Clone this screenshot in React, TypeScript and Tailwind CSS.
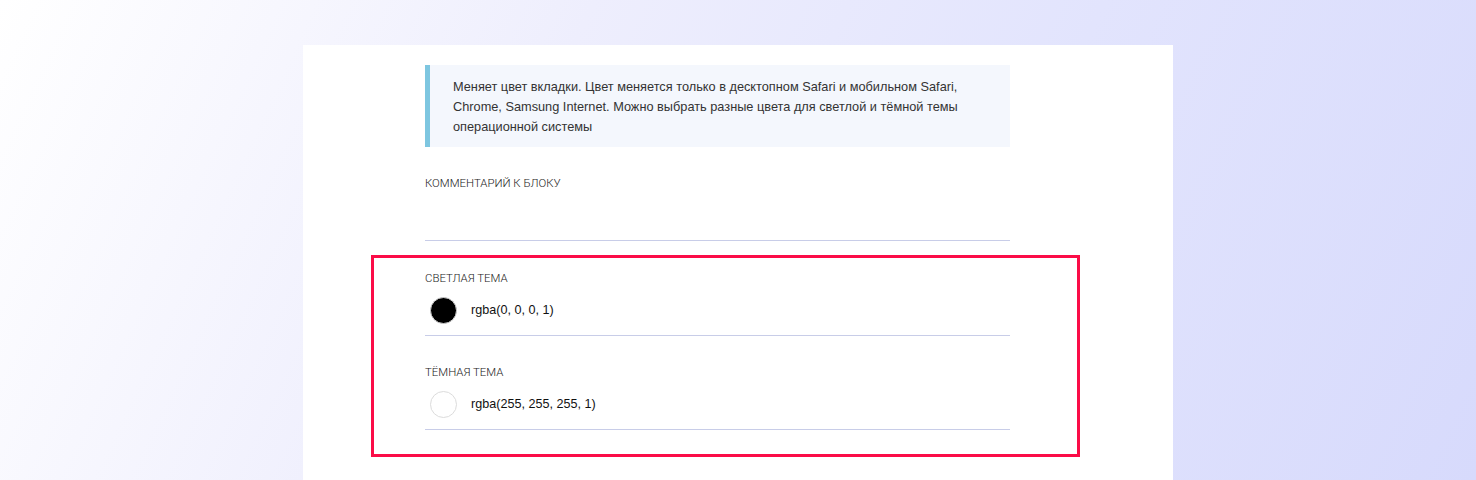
export default function App() {
  const font = { fontFamily: '"Liberation Sans", Arial, sans-serif' };
  return (
    <div
      className="w-[1476px] h-[480px] overflow-hidden bg-[linear-gradient(115deg,#ffffff_0%,#eeeefd_35%,#e2e4fd_65%,#d7dafc_100%)]"
      style={font}
    >
      <div className="mx-auto mt-[45px] w-[870px] h-[435px] bg-white">
        <div className="ml-[122px] w-[585px] pt-5">
          <div className="border-l-[5px] border-[#7ec6e0] bg-[#f4f7fd] pl-[23px] pr-4 pt-3 pb-[10px] text-[12.75px] leading-5 text-[#333]">
            Меняет цвет вкладки. Цвет меняется только в десктопном Safari и мобильном Safari,
            <br />
            Chrome, Samsung Internet. Можно выбрать разные цвета для светлой и тёмной темы
            <br />
            операционной системы
          </div>

          <div className="mt-7">
            <Label text="Комментарий к блоку" />
            <div className="h-[50px] border-b border-[#c8cde8]" />
          </div>

          <div className="relative mt-[29px]">
            <div className="pointer-events-none absolute -left-[54px] -right-[70px] -top-[15px] -bottom-[27px] border-[3px] border-[#fb0c47]" />
            <ThemeRow label="Светлая тема" value="rgba(0, 0, 0, 1)" dark />
            <div className="h-7" />
            <ThemeRow label="Тёмная тема" value="rgba(255, 255, 255, 1)" />
          </div>
        </div>
      </div>
    </div>
  );
}

function Label({ text }: { text: string }) {
  return (
    <div
      className="text-[11.4px] leading-4 uppercase font-light text-[#222]"
      style={{ fontFamily: 'Roboto, "Liberation Sans", sans-serif' }}
    >
      {text}
    </div>
  );
}

function ThemeRow({ label, value, dark }: { label: string; value: string; dark?: boolean }) {
  return (
    <div className="border-b border-[#c8cde8] pb-3">
      <Label text={label} />
      <div className="mt-[11px] flex items-center h-[26px]">
        <div
          className={
            dark
              ? "ml-[5px] w-[27px] h-[27px] shrink-0 rounded-full bg-black border border-[#cfcfcf]"
              : "ml-[5px] w-[27px] h-[27px] shrink-0 rounded-full bg-white border border-[#dcdcdc]"
          }
        />
        <span className="ml-[14px] text-[12.6px] text-[#111]">{value}</span>
      </div>
    </div>
  );
}
